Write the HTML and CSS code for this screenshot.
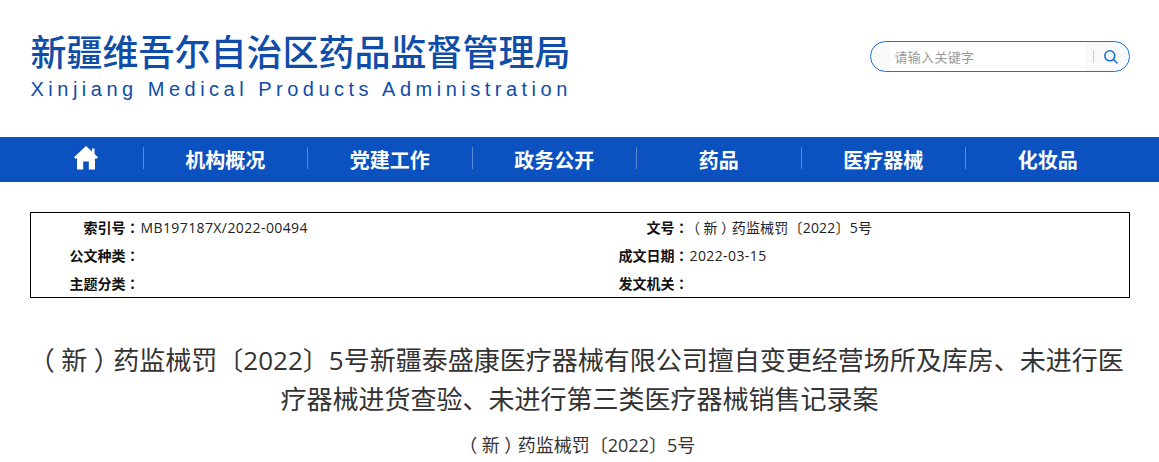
FILE: index.html
```html
<!DOCTYPE html>
<html lang="zh-CN">
<head>
    <meta charset="UTF-8">
    <title>新疆维吾尔自治区药品监督管理局</title>
    <link rel="stylesheet" href="styles.css">
</head>
<body>

<header class="top">
    <div class="logo">
        <div class="logo-cn">新疆维吾尔自治区药品监督管理局</div>
        <div class="logo-en">Xinjiang Medical Products Administration</div>
    </div>
    <div class="search">
        <div class="search-input">请输入关键字</div>
        <div class="search-btn">
            <svg width="16" height="16" viewBox="0 0 16 16" fill="none" stroke="#1a73d9" stroke-width="1.6">
                <circle cx="6.8" cy="6.8" r="5"/>
                <path d="M10.5 10.5L14.5 14.5"/>
            </svg>
        </div>
    </div>
</header>

<nav class="nav">
    <div class="nav-inner">
        <a class="nav-home" href="#">
            <svg width="24" height="24" viewBox="0 0 24 24" fill="#fff">
                <path d="M12 0L18 5.5V2.5H20.5V8L24 11.3L22.8 12.6H21V23.5H14.8V15.5H9.2V23.5H3V12.6H1.2L0 11.3Z"/>
            </svg>
        </a>
        <a href="#">机构概况</a>
        <a href="#">党建工作</a>
        <a href="#">政务公开</a>
        <a href="#">药品</a>
        <a href="#">医疗器械</a>
        <a href="#">化妆品</a>
    </div>
</nav>

<div class="meta">
    <b>索引号<i class="mid" lang="zh-TW">：</i></b><span class="num">MB197187X/2022-00494</span>
    <b>文号<i class="mid" lang="zh-TW">：</i></b><span><i class="paren">（</i>新<i class="paren">）</i>药监械罚〔2022〕5号</span>
    <b>公文种类<i class="mid" lang="zh-TW">：</i></b><span></span>
    <b>成文日期<i class="mid" lang="zh-TW">：</i></b><span class="num">2022-03-15</span>
    <b>主题分类<i class="mid" lang="zh-TW">：</i></b><span></span>
    <b>发文机关<i class="mid" lang="zh-TW">：</i></b><span></span>
</div>

<h1 class="title"><i class="paren">（</i>新<i class="paren">）</i>药监械罚〔2022〕5号新疆泰盛康医疗器械有限公司擅自变更经营场所及库房、未进行医疗器械进货查验、未进行第三类医疗器械销售记录案</h1>
<p class="subtitle"><i class="paren">（</i>新<i class="paren">）</i>药监械罚〔2022〕5号</p>

</body>
</html>
```

FILE: styles.css
```css
body{
    margin: 0;
    background-color: #fff;
    color: #333;
    font-family: "Open Sans", "Noto Sans CJK SC", sans-serif;
}

a{
    text-decoration: none;
    color: #fff;
}

/* colon sits in the middle of the cell in the TC font */
.mid{
    font-style: normal;
    font-family: "Noto Sans CJK TC", sans-serif;
}

/* brackets centred in a full cell */
.paren{
    display: inline-block;
    width: 1em;
    font-style: normal;
    text-align: center;
    font-feature-settings: "halt";
}

.top{
    width: 1100px;
    height: 137px;
    margin: 0 auto;
    display: flex;
    justify-content: space-between;
    align-items: flex-start;
}

.logo{
    padding: 31px 0 0 1px;
    color: #0f4da8;
}

.logo-cn{
    font-size: 36px;
    line-height: 44px;
    font-weight: 500;
    white-space: nowrap;
}

.logo-en{
    margin-top: 1px;
    font-family: "Liberation Sans", sans-serif;
    font-size: 20px;
    line-height: 26px;
    letter-spacing: 4.5px;
    white-space: nowrap;
}

.search{
    box-sizing: border-box;
    width: 260px;
    height: 31px;
    margin-top: 41px;
    display: flex;
    border: 1px solid #1a73d9;
    border-radius: 16px;
    background-color: #f9f9f9;
    overflow: hidden;
}

.search-input{
    width: 195px;
    margin-left: 19px;
    padding-left: 5px;
    background-color: #fff;
    color: #999;
    font-size: 13px;
    line-height: 30px;
    letter-spacing: 0.3px;
    box-sizing: border-box;
}

.search-btn{
    flex: 1;
    display: flex;
    align-items: center;
    justify-content: flex-end;
    padding-right: 10px;
}

.search-btn::before{
    content: "";
    width: 1px;
    height: 13px;
    background-color: #ccc;
    margin-right: 9px;
}

.nav{
    height: 45px;
    background-color: #0c51c0;
}

.nav-inner{
    width: 1100px;
    margin: 0 auto;
    height: 45px;
    display: grid;
    grid-template-columns: 113px repeat(6, 1fr);
    align-items: center;
}

.nav-inner a{
    height: 22px;
    line-height: 27px;
    margin-bottom: 3px;
    text-align: center;
    font-size: 20px;
    font-weight: 700;
    border-left: 1px solid #5c8ad6;
}

.nav-inner .nav-home{
    border-left: none;
    display: flex;
    justify-content: center;
    align-items: center;
}

.meta{
    box-sizing: border-box;
    width: 1100px;
    height: 86px;
    margin: 30px auto 0;
    padding: 0 0 4px;
    border: 1px solid #000;
    display: grid;
    grid-template-columns: 109px 440px 109px 1fr;
    grid-auto-rows: 28px;
    align-items: center;
    font-size: 14px;
    color: #222;
}

.meta b{
    text-align: right;
    color: #111;
}

.meta span{
    padding-left: 1px;
    letter-spacing: 0.2px;
}

.meta .num{
    letter-spacing: 0.4px;
}

.title{
    width: 1100px;
    margin: 43px auto 0;
    font-size: 26px;
    line-height: 39px;
    font-weight: 400;
    text-align: center;
}

.subtitle{
    margin: 14px 0 0;
    font-size: 18px;
    line-height: 24px;
    text-align: center;
}
```
